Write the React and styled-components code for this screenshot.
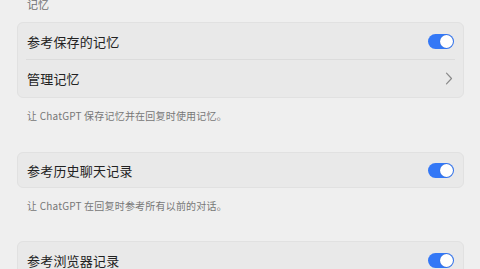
import React from 'react';
import styled, { createGlobalStyle } from 'styled-components';

const GlobalStyle = createGlobalStyle`
  html, body {
    margin: 0;
    padding: 0;
    background: #efefef;
  }
  body {
    font-family: "Noto Sans CJK SC", "Noto Sans", sans-serif;
    -webkit-font-smoothing: antialiased;
  }
`;

const Page = styled.div`
  display: flex;
  flex-direction: column;
  padding: 0 16px 0 17px;
  margin-top: -3px;
  height: 272px;
  overflow: hidden;
`;

const SectionTitle = styled.div`
  font-size: 11px;
  line-height: 14px;
  color: #6f6f6f;
  padding-left: 10px;
  margin-bottom: 11px;
`;

const Card = styled.div`
  background: #e9e9e9;
  border: 1px solid #e1e1e1;
  border-radius: 6px;
  display: flex;
  flex-direction: column;
  margin-top: ${p => p.$gap || 0}px;
`;

const Row = styled.div`
  display: flex;
  align-items: center;
  justify-content: space-between;
  height: ${p => p.$h || 36}px;
  padding: 0 9px 0 9px;
  border-top: ${p => (p.$divider ? '1px solid #dcdcdc' : 'none')};
  margin: 0 ${p => (p.$divider ? '8px' : '0')};
  padding-left: ${p => (p.$divider ? '1px' : '9px')};
  padding-right: ${p => (p.$divider ? '2px' : '9px')};
`;

const Label = styled.span`
  font-size: 13px;
  color: #222;
  letter-spacing: 0.2px;
`;

const Caption = styled.div`
  font-size: 10px;
  line-height: 14px;
  color: #777;
  padding-left: 10px;
  margin-top: ${p => p.$gap || 0}px;
  letter-spacing: 0.2px;
`;

const Track = styled.div`
  width: 26px;
  height: 15px;
  border-radius: 8px;
  background: #3478f6;
  display: flex;
  align-items: center;
  justify-content: flex-end;
  padding: 0 1px;
  box-sizing: border-box;
`;

const Knob = styled.div`
  width: 13px;
  height: 13px;
  border-radius: 50%;
  background: #fff;
  box-shadow: 0 0 1px rgba(0, 0, 0, 0.3);
`;

const Toggle = () => (
  <Track>
    <Knob />
  </Track>
);

const Chevron = () => (
  <svg width="8" height="13" viewBox="0 0 8 13" fill="none">
    <path d="M1.5 1.2 L6.5 6.5 L1.5 11.8" stroke="#8a8a8a" strokeWidth="1.2" strokeLinecap="round" strokeLinejoin="round" />
  </svg>
);

export default function App() {
  return (
    <>
      <GlobalStyle />
      <Page>
        <SectionTitle>记忆</SectionTitle>
        <Card>
          <Row $h={36}>
            <Label>参考保存的记忆</Label>
            <Toggle />
          </Row>
          <Row $h={37} $divider>
            <Label>管理记忆</Label>
            <Chevron />
          </Row>
        </Card>
        <Caption $gap={11}>让 ChatGPT 保存记忆并在回复时使用记忆。</Caption>
        <Card $gap={29}>
          <Row $h={34}>
            <Label>参考历史聊天记录</Label>
            <Toggle />
          </Row>
        </Card>
        <Caption $gap={11}>让 ChatGPT 在回复时参考所有以前的对话。</Caption>
        <Card $gap={28}>
          <Row $h={36}>
            <Label>参考浏览器记录</Label>
            <Toggle />
          </Row>
        </Card>
      </Page>
    </>
  );
}
